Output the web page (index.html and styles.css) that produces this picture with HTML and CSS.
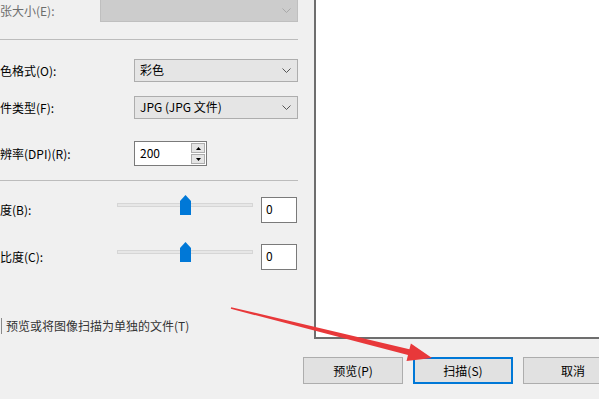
FILE: index.html
```html
<!DOCTYPE html>
<html lang="zh-CN">
<head>
    <meta charset="UTF-8">
    <title>扫描</title>
    <link rel="stylesheet" href="styles.css">
</head>
<body>

<div class="dialog">
    <!-- 左侧设置 -->
    <div class="settings">
        <div class="row row-paper">
            <span class="label label-paper disabled">张大小(E):</span>
            <div class="combo combo-disabled">
                <span class="combo-text"></span>
                <svg class="chevron" width="9" height="5" viewBox="0 0 9 5"><polyline points="0.5,0.5 4.5,4.5 8.5,0.5" fill="none" stroke="#a9a9a9" stroke-width="1"/></svg>
            </div>
        </div>
        <div class="sep sep-1"></div>

        <div class="row row-color">
            <span class="label label-wide">色格式(O):</span>
            <div class="combo">
                <span class="combo-text">彩色</span>
                <svg class="chevron" width="9" height="5" viewBox="0 0 9 5"><polyline points="0.5,0.5 4.5,4.5 8.5,0.5" fill="none" stroke="#555" stroke-width="1"/></svg>
            </div>
        </div>
        <div class="row row-type">
            <span class="label label-wide">件类型(F):</span>
            <div class="combo">
                <span class="combo-text">JPG (JPG 文件)</span>
                <svg class="chevron" width="9" height="5" viewBox="0 0 9 5"><polyline points="0.5,0.5 4.5,4.5 8.5,0.5" fill="none" stroke="#555" stroke-width="1"/></svg>
            </div>
        </div>
        <div class="row row-dpi">
            <span class="label label-wide">辨率(DPI)(R):</span>
            <div class="spin">
                <span class="spin-text">200</span>
                <div class="spin-buttons">
                    <div class="spin-btn"><svg width="5" height="3" viewBox="0 0 5 3"><polygon points="2.5,0 5,3 0,3" fill="#000"/></svg></div>
                    <div class="spin-btn"><svg width="5" height="3" viewBox="0 0 5 3"><polygon points="0,0 5,0 2.5,3" fill="#000"/></svg></div>
                </div>
            </div>
        </div>
        <div class="sep sep-2"></div>

        <div class="row row-bright">
            <span class="label label-slider">度(B):</span>
            <div class="slider">
                <div class="track"></div>
                <div class="thumb"></div>
            </div>
            <div class="value-box">0</div>
        </div>
        <div class="row row-contrast">
            <span class="label label-slider">比度(C):</span>
            <div class="slider">
                <div class="track"></div>
                <div class="thumb"></div>
            </div>
            <div class="value-box">0</div>
        </div>

        <div class="row row-check">
            <span class="check-edge"></span>
            <span class="check-text">预览或将图像扫描为单独的文件(T)</span>
        </div>
    </div>

    <!-- 预览区域 -->
    <div class="preview"></div>

    <!-- 底部按钮 -->
    <div class="buttons">
        <button class="btn">预览(P)</button>
        <button class="btn btn-default">扫描(S)</button>
        <button class="btn">取消</button>
    </div>
</div>

<!-- 红色标注箭头 -->
<svg class="arrow" width="599" height="399" viewBox="0 0 599 399">
    <polygon points="231.2,307.2 409.4,349.3 410.9,343.5 432,358 406.5,360.9 408,355.1 230.8,308.8" fill="#e8383a"/>
</svg>

</body>
</html>
```

FILE: styles.css
```css
body {
    margin: 0;
    background-color: #f0f0f0;
    font-family: "Noto Sans CJK SC", "Noto Sans", sans-serif;
    font-size: 12px;
    color: #000;
    overflow: hidden;
}
.dialog {
    display: grid;
    grid-template-columns: 314px 1fr;
    grid-template-rows: 339px 60px;
    width: 599px;
    height: 399px;
}
.settings {
    padding-right: 16px;
}
.row {
    display: flex;
    align-items: center;
}
.label {
    white-space: nowrap;
    line-height: 16px;
}
.label-paper {
    width: 100px;
}
.label-wide {
    width: 134px;
}
.label-slider {
    width: 117px;
}
.disabled {
    color: #6d6d6d;
}

/* 行位置 */
.row-paper {
    height: 23px;
    margin-top: -1px;
}
.sep {
    height: 1px;
    background-color: #bcbcbc;
}
.sep-1 {
    margin-top: 17px;
}
.row-color {
    height: 23px;
    margin-top: 19px;
}
.row-type {
    height: 23px;
    margin-top: 14px;
}
.row-dpi {
    height: 25px;
    margin-top: 22px;
}
.sep-2 {
    margin-top: 14px;
}
.row-bright {
    height: 26px;
    margin-top: 16px;
}
.row-contrast {
    height: 26px;
    margin-top: 21px;
}
.row-check {
    height: 16px;
    margin-top: 48px;
}

/* 下拉框 */
.combo {
    flex: 1;
    height: 23px;
    box-sizing: border-box;
    border: 1px solid #adadad;
    background-color: #e5e5e5;
    display: flex;
    align-items: center;
    justify-content: space-between;
    padding: 0 6px 0 5px;
}
.combo-disabled {
    background-color: #cccccc;
    border-color: #bfbfbf;
}
.combo-text {
    line-height: 16px;
    margin-top: -2px;
}
.chevron {
    display: block;
}

/* 数字框 */
.spin {
    width: 73px;
    height: 25px;
    box-sizing: border-box;
    border: 1px solid #7a7a7a;
    background-color: #fff;
    display: flex;
    align-items: center;
    justify-content: space-between;
    padding: 1px 1px 1px 5px;
}
.spin-text {
    line-height: 16px;
    margin-top: -2px;
}
.spin-buttons {
    display: flex;
    flex-direction: column;
    gap: 1px;
    width: 14px;
    height: 21px;
}
.spin-btn {
    flex: 1;
    box-sizing: border-box;
    border: 1px solid #adadad;
    background-color: #e5e5e5;
    display: flex;
    align-items: center;
    justify-content: center;
}
.spin-btn svg {
    display: block;
}

/* 滑块 */
.slider {
    width: 136px;
    height: 20px;
    align-self: flex-start;
    margin-top: -2px;
    display: flex;
    align-items: center;
    position: relative;
}
.track {
    width: 100%;
    height: 4px;
    box-sizing: border-box;
    border: 1px solid #d6d6d6;
    background-color: #e7e7e7;
}
.thumb {
    position: absolute;
    left: 63px;
    top: 0;
    width: 11px;
    height: 20px;
    background-color: #0078d7;
    clip-path: polygon(50% 0, 100% 30%, 100% 100%, 0 100%, 0 30%);
}
.value-box {
    width: 36px;
    height: 26px;
    box-sizing: border-box;
    margin-left: 8px;
    border: 1px solid #7a7a7a;
    background-color: #fff;
    padding-left: 4px;
    line-height: 22px;
}

/* 复选框 */
.check-edge {
    width: 1px;
    height: 16px;
    margin-left: 1px;
    background-color: #8a8a8a;
}
.check-text {
    margin-left: 4px;
    color: #333;
    line-height: 16px;
}

/* 预览 */
.preview {
    background-color: #fff;
    border-left: 2px solid #6e6e6e;
    border-bottom: 2px solid #6e6e6e;
    box-sizing: border-box;
}

/* 按钮 */
.buttons {
    grid-column: 1 / -1;
    display: flex;
    gap: 10px;
    padding: 18px 0 0 303px;
}
.btn {
    flex: none;
    width: 100px;
    height: 27px;
    box-sizing: border-box;
    border: 1px solid #adadad;
    background-color: #e1e1e1;
    font-family: inherit;
    font-size: 12px;
    color: #000;
    padding: 0;
    line-height: 16px;
}
.btn-default {
    border: 2px solid #0078d7;
}

.arrow {
    position: absolute;
    left: 0;
    top: 0;
    pointer-events: none;
}
```
